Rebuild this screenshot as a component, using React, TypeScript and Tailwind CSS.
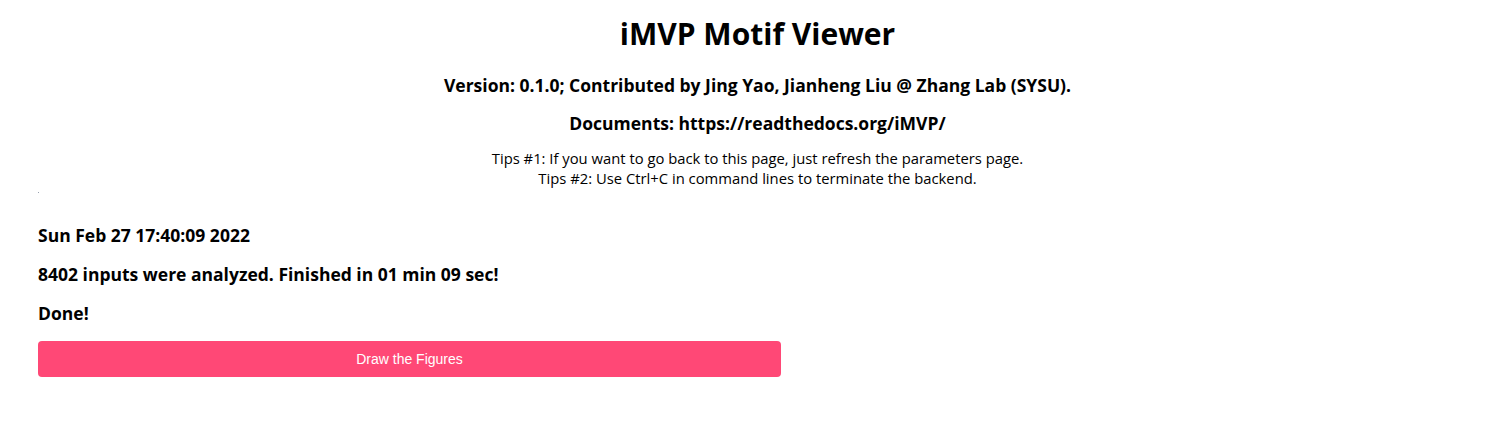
export default function App() {
    return (
        <div className="min-h-screen bg-white text-black" style={{ fontFamily: '"Open Sans", "Noto Sans", sans-serif' }}>
            <div className="text-center pt-[14px] pl-[10px]">
                <h1 className="text-[30px] font-bold leading-[40px]">iMVP Motif Viewer</h1>
                <h3 className="mt-[20px] text-[17.5px] font-bold leading-[22px]">
                    Version: 0.1.0; Contributed by Jing Yao, Jianheng Liu @ Zhang Lab (SYSU).
                </h3>
                <h3 className="mt-[16px] text-[17.5px] font-bold leading-[22px]">Documents: https://readthedocs.org/iMVP/</h3>
                <p className="mt-[14px] text-[14.8px] leading-[20px]">
                    Tips #1: If you want to go back to this page, just refresh the parameters page.
                    <br />
                    Tips #2: Use Ctrl+C in command lines to terminate the backend.
                </p>
            </div>
            <div className="px-[38px]">
                <div className="mt-[4px] h-[1px] w-[1px] bg-gray-400" />
                <h3 className="mt-[31px] text-[17.5px] font-bold leading-[22px]">Sun Feb 27 17:40:09 2022</h3>
                <h3 className="mt-[17px] text-[17.5px] font-bold leading-[22px]">
                    8402 inputs were analyzed. Finished in 01 min 09 sec!
                </h3>
                <h3 className="mt-[17px] text-[17.5px] font-bold leading-[22px]">Done!</h3>
                <button
                    className="mt-[17px] h-[36px] w-[743px] rounded-[4px] bg-[#ff4876] text-[14px] text-white"
                    style={{ fontFamily: '"Liberation Sans", Arial, sans-serif' }}
                >
                    Draw the Figures
                </button>
            </div>
        </div>
    );
}
